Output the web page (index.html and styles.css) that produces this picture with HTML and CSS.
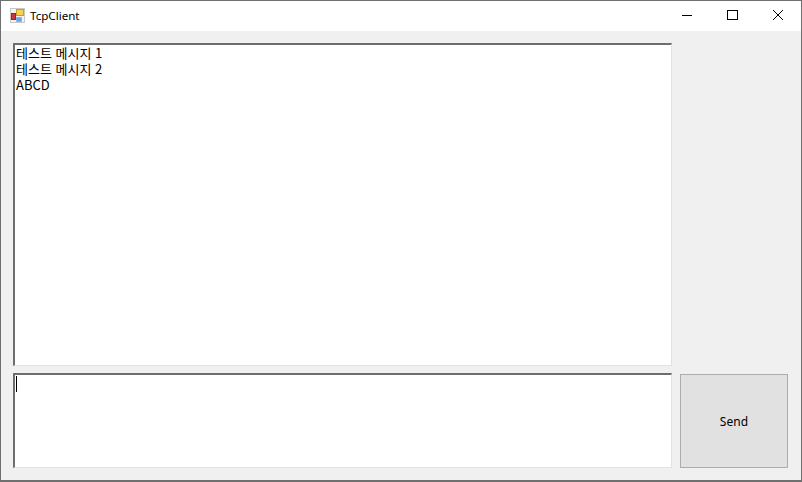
FILE: index.html
```html
<!DOCTYPE html>
<html lang="ko">
    <head>
        <meta charset="UTF-8" />
        <title>TcpClient</title>
        <link rel="stylesheet" href="styles.css">
    </head>
    <body>
        <div class="window">
            <!--Title bar-->
            <header class="titlebar">
                <svg class="app-icon" width="16" height="16" viewBox="0 0 16 16">
                    <rect x="0.5" y="0.5" width="14" height="14" fill="#f4f4f4" stroke="#c8c8c8"/>
                    <rect x="6.5" y="1.5" width="7" height="6" fill="#f6d24e" stroke="#d49a22"/>
                    <rect x="1.5" y="5.5" width="4" height="6" fill="#c8383a" stroke="#8c2b2b"/>
                    <rect x="6.5" y="9.5" width="5" height="4" fill="#6aa2ea" stroke="#8fb6ea"/>
                </svg>
                <span class="title">TcpClient</span>
                <div class="controls">
                    <div class="control">
                        <svg width="12" height="12" viewBox="0 0 12 12"><path d="M2 6.5H12" stroke="#000" fill="none"/></svg>
                    </div>
                    <div class="control">
                        <svg width="12" height="12" viewBox="0 0 12 12"><rect x="1.5" y="1.5" width="10" height="9" stroke="#000" fill="none"/></svg>
                    </div>
                    <div class="control">
                        <svg width="12" height="12" viewBox="0 0 12 12"><path d="M1 1L11 11M11 1L1 11" stroke="#000" fill="none"/></svg>
                    </div>
                </div>
            </header>

            <!--Client area-->
            <main class="client">
                <div class="left">
                    <div class="box messages">
                        <div>테스트 메시지 1</div>
                        <div>테스트 메시지 2</div>
                        <div>ABCD</div>
                    </div>
                    <div class="box input"><span class="caret"></span></div>
                </div>
                <div class="right">
                    <button class="send">Send</button>
                </div>
            </main>
        </div>
    </body>
</html>
```

FILE: styles.css
```css
html, body {
    margin: 0;
    height: 100%;
    overflow: hidden;
}
body {
    font-family: "Noto Sans CJK KR", "Liberation Sans", sans-serif;
    font-size: 12px;
    color: #000;
}
.window {
    box-sizing: border-box;
    width: 802px;
    height: 482px;
    border: 1px solid #6f6f6f;
    border-bottom-width: 2px;
    display: flex;
    flex-direction: column;
    background-color: #f0f0f0;
}
.titlebar {
    flex: 0 0 30px;
    background-color: #fff;
    display: flex;
    align-items: center;
    padding-left: 9px;
}
.app-icon {
    margin-right: 4px;
}
.title {
    font-family: "Noto Sans", "Liberation Sans", sans-serif;
    font-size: 11.6px;
    margin-top: -2px;
}
.controls {
    margin-left: auto;
    display: flex;
}
.control {
    width: 46px;
    height: 30px;
    display: flex;
    align-items: center;
    justify-content: center;
    margin-top: -2px;
}
.client {
    flex: 1;
    display: flex;
    padding: 12px 13px 12px 12px;
    gap: 8px;
}
.left {
    width: 659px;
    display: flex;
    flex-direction: column;
    gap: 7px;
}
.box {
    box-sizing: border-box;
    background-color: #fff;
    border-top: 2px solid #6d6d6d;
    border-left: 2px solid #6d6d6d;
    border-right: 1px solid #e3e3e3;
    border-bottom: 1px solid #e3e3e3;
}
.messages {
    flex: 0 0 323px;
    padding: 0 1px;
    font-size: 13px;
    line-height: 16px;
}
.input {
    flex: 1;
    padding: 1px 0 0 1px;
}
.caret {
    display: block;
    width: 1px;
    height: 16px;
    background-color: #000;
}
.right {
    flex: 1;
    display: flex;
    flex-direction: column;
    justify-content: flex-end;
}
.send {
    box-sizing: border-box;
    width: 108px;
    height: 94px;
    padding: 0;
    background-color: #e1e1e1;
    border: 1px solid #adadad;
    font-family: "Noto Sans", "Liberation Sans", sans-serif;
    font-size: 12px;
    letter-spacing: 0.1px;
    color: #000;
}
```
